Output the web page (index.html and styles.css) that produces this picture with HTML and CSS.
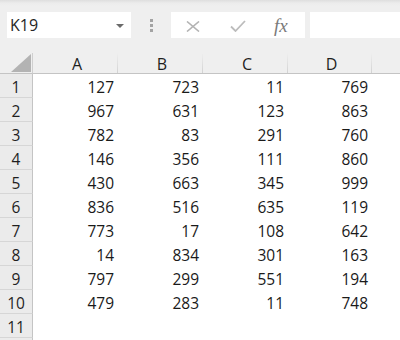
FILE: index.html
```html
<!DOCTYPE html>
<html>
<head>
<meta charset="utf-8">
<link rel="stylesheet" href="styles.css">
</head>
<body>
<div class="app">
  <div class="toolbar">
    <div class="namebox">
      <span class="ref">K19</span>
      <svg class="arrow" width="8" height="4" viewBox="0 0 8 4"><polygon points="0,0 8,0 4,4" fill="#6a6a6a"/></svg>
    </div>
    <div class="grip">
      <svg width="4" height="14" viewBox="0 0 4 14"><rect x="0" y="0" width="3" height="3" fill="#a3a3a3"/><rect x="0" y="5" width="3" height="3" fill="#a3a3a3"/><rect x="0" y="10" width="3" height="3" fill="#a3a3a3"/></svg>
    </div>
    <div class="fbuttons">
      <svg class="cancel" width="14" height="11" viewBox="0 0 14 11"><path d="M1 0.5 L13 10.5 M13 0.5 L1 10.5" stroke="#b3b3b3" stroke-width="1.6" fill="none"/></svg>
      <svg class="enter" width="16" height="12" viewBox="0 0 16 12"><path d="M1 6.5 L5.5 11 L15 1" stroke="#bcbcbc" stroke-width="1.8" fill="none"/></svg>
      <span class="fx">fx</span>
    </div>
    <div class="finput"></div>
  </div>
  <div class="sheet">
    <div class="corner"><svg width="33" height="20" viewBox="0 0 33 20"><polygon points="12,19 32,19 32,1" fill="#b3b3b3"/></svg></div>
    <div class="ch">A</div><div class="ch">B</div><div class="ch">C</div><div class="ch">D</div><div class="ch last"></div>

    <div class="rh">1</div><div class="c">127</div><div class="c">723</div><div class="c">11</div><div class="c">769</div><div class="c"></div>
    <div class="rh">2</div><div class="c">967</div><div class="c">631</div><div class="c">123</div><div class="c">863</div><div class="c"></div>
    <div class="rh">3</div><div class="c">782</div><div class="c">83</div><div class="c">291</div><div class="c">760</div><div class="c"></div>
    <div class="rh">4</div><div class="c">146</div><div class="c">356</div><div class="c">111</div><div class="c">860</div><div class="c"></div>
    <div class="rh">5</div><div class="c">430</div><div class="c">663</div><div class="c">345</div><div class="c">999</div><div class="c"></div>
    <div class="rh">6</div><div class="c">836</div><div class="c">516</div><div class="c">635</div><div class="c">119</div><div class="c"></div>
    <div class="rh">7</div><div class="c">773</div><div class="c">17</div><div class="c">108</div><div class="c">642</div><div class="c"></div>
    <div class="rh">8</div><div class="c">14</div><div class="c">834</div><div class="c">301</div><div class="c">163</div><div class="c"></div>
    <div class="rh">9</div><div class="c">797</div><div class="c">299</div><div class="c">551</div><div class="c">194</div><div class="c"></div>
    <div class="rh">10</div><div class="c">479</div><div class="c">283</div><div class="c">11</div><div class="c">748</div><div class="c"></div>
    <div class="rh">11</div><div class="c"></div><div class="c"></div><div class="c"></div><div class="c"></div><div class="c"></div>
    <div class="rh"></div><div class="c"></div><div class="c"></div><div class="c"></div><div class="c"></div><div class="c"></div>
  </div>
</div>
</body>
</html>
```
FILE: styles.css
```css
html, body {
  margin: 0;
  padding: 0;
  background: #ffffff;
}
.app {
  width: 400px;
  height: 340px;
  overflow: hidden;
  font-family: "Open Sans", "Noto Sans", sans-serif;
  color: #1f1f1f;
}
.toolbar {
  height: 53px;
  box-sizing: border-box;
  padding: 12px 0 0 7px;
  display: flex;
  align-items: flex-start;
  background: linear-gradient(#dedede 0, #ececec 3px, #efefef 6px, #efefef 100%);
}
.namebox {
  width: 124px;
  height: 26px;
  background: #ffffff;
  display: flex;
  align-items: center;
  justify-content: space-between;
  box-sizing: border-box;
  padding: 0 7px 0 3px;
}
.ref {
  font-size: 16px;
  line-height: 20px;
  color: #262626;
}
.arrow {
  display: block;
  margin-top: 1px;
}
.grip {
  width: 40px;
  height: 26px;
  display: flex;
  justify-content: center;
  align-items: center;
  box-sizing: border-box;
}
.grip svg {
  display: block;
  margin-left: 1px;
  margin-top: 2px;
}
.fbuttons {
  width: 134px;
  height: 26px;
  background: #ffffff;
  display: flex;
  align-items: center;
  box-sizing: border-box;
  padding-left: 15px;
}
.cancel {
  display: block;
  margin-top: 2px;
}
.enter {
  display: block;
  margin-left: 30px;
  margin-top: 1px;
}
.fx {
  margin-left: 28px;
  font-family: "Liberation Serif", "DejaVu Serif", serif;
  font-style: italic;
  font-size: 19px;
  line-height: 20px;
  color: #7a7a7a;
  margin-top: 1px;
}
.finput {
  flex: 1;
  height: 26px;
  margin-left: 5px;
  background: #ffffff;
}
.sheet {
  display: grid;
  grid-template-columns: 33px 85px 85px 85px 84px 28px;
  grid-template-rows: 21px repeat(12, 24px);
}
.corner {
  background: #efefef;
  border-bottom: 1px solid #c4c4c4;
  border-right: 1px solid #cfcfcf;
  box-sizing: border-box;
}
.corner svg {
  display: block;
  margin-left: -1px;
}
.ch {
  background: linear-gradient(to bottom, #efefef, #d2d2d2) right top / 1px 100% no-repeat, #efefef;
  border-bottom: 1px solid #c4c4c4;
  box-sizing: border-box;
  text-align: center;
  font-size: 16px;
  line-height: 20px;
  padding-top: 1px;
  padding-left: 3px;
  color: #1f1f1f;
}
.ch.last {
  background: #efefef;
}
.rh {
  background: #ebebeb;
  border-bottom: 1px solid #d6d6d6;
  border-right: 1px solid #c4c4c4;
  box-sizing: border-box;
  text-align: center;
  font-size: 15.5px;
  line-height: 18px;
  padding-top: 4px;
  color: #1f1f1f;
}
.c {
  background: #ffffff;
  text-align: right;
  font-size: 15.5px;
  line-height: 18px;
  padding: 4px 4px 0 0;
  color: #1a1a1a;
}
```
